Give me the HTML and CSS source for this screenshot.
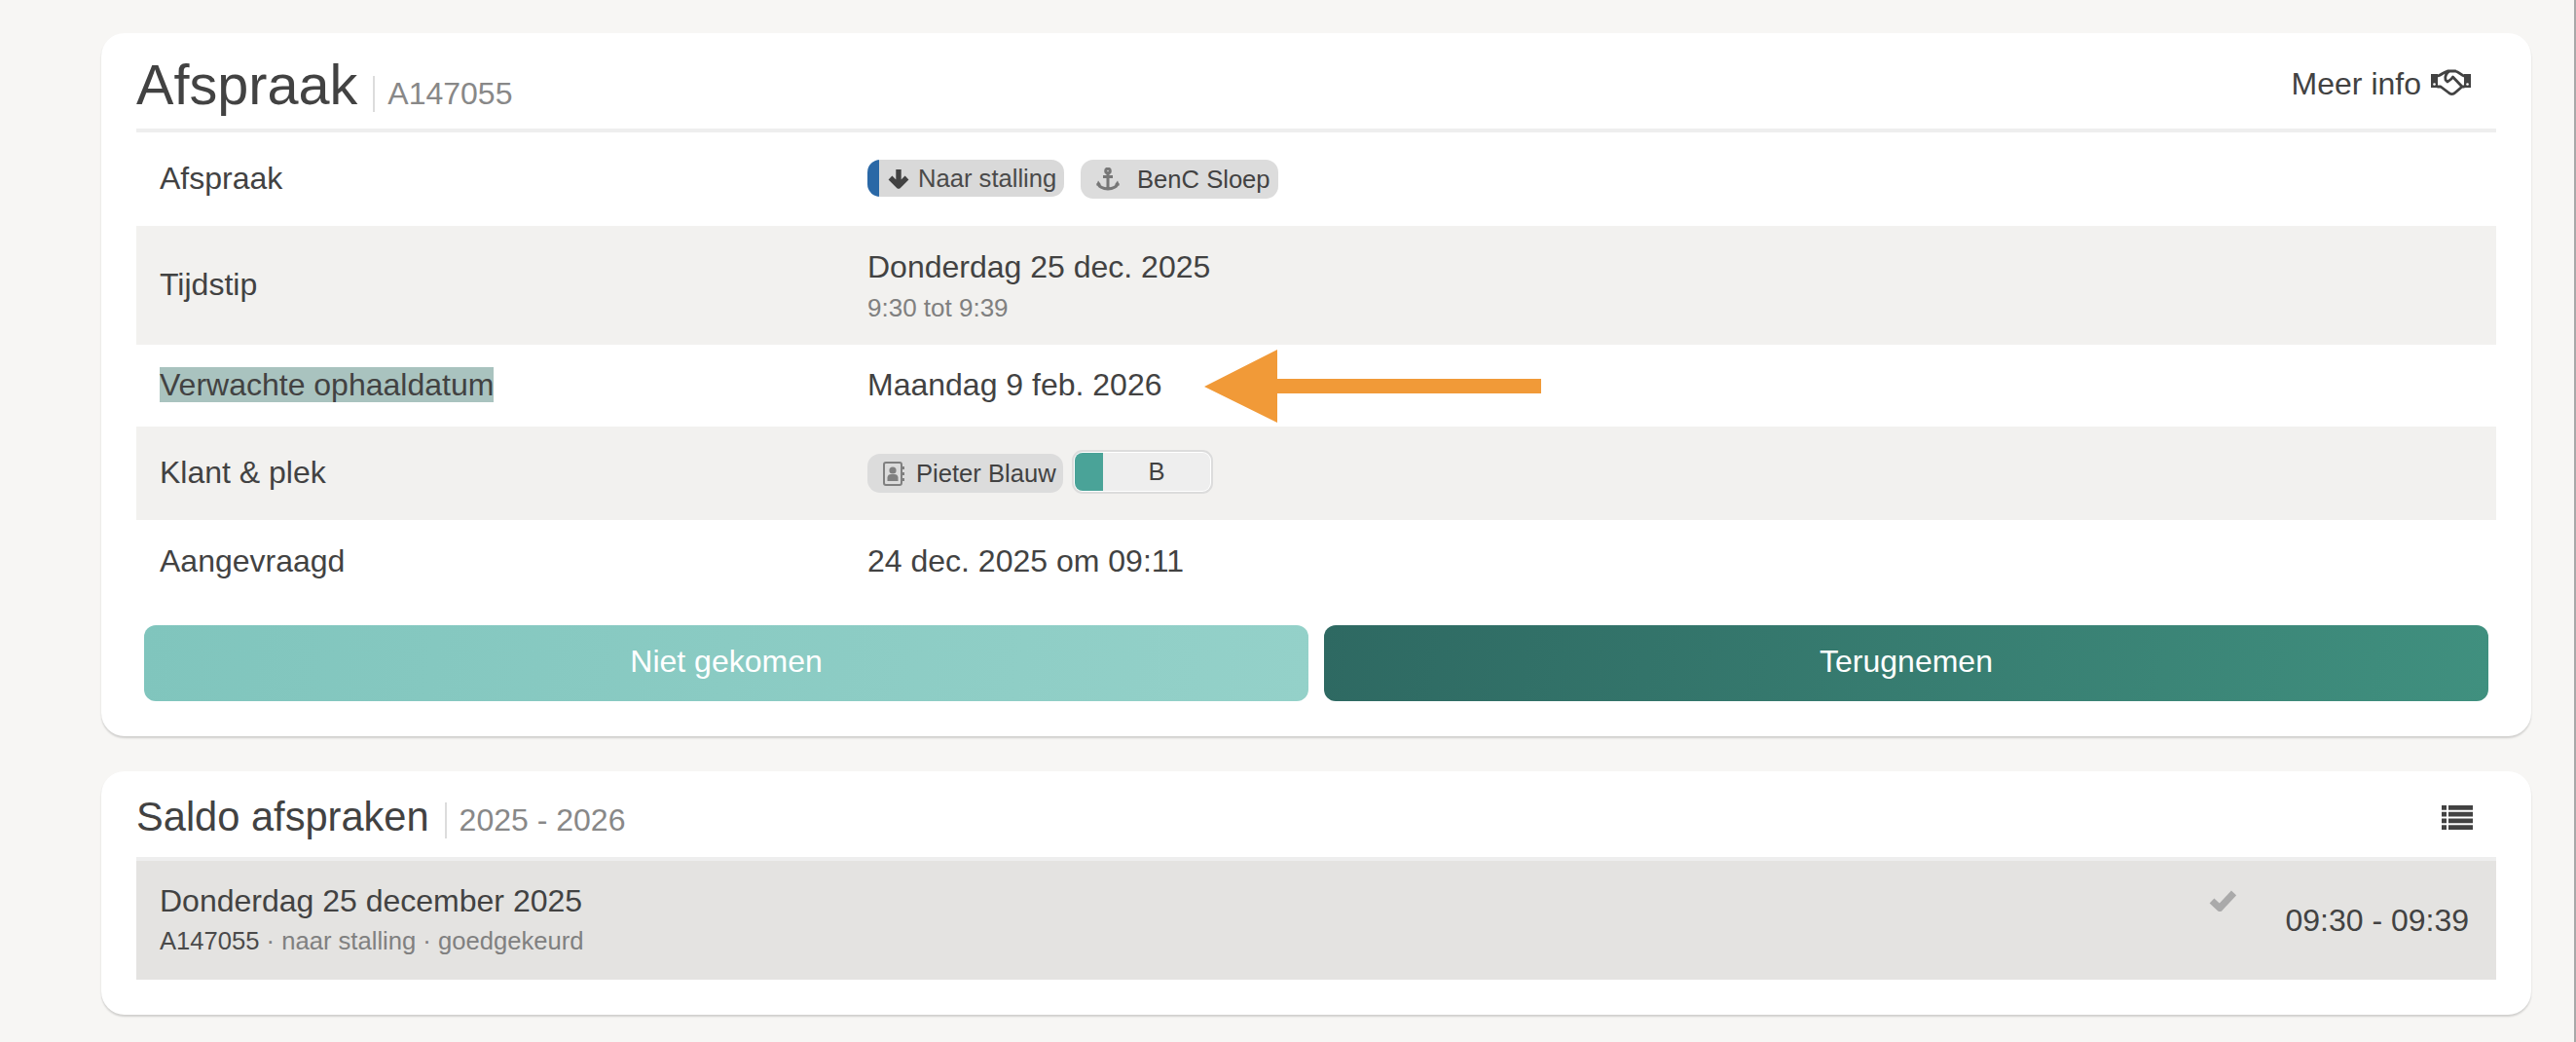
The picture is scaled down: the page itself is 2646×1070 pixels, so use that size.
FILE: index.html
```html
<!DOCTYPE html>
<html lang="nl">
<head>
<meta charset="utf-8">
<title>Afspraak A147055</title>
<link rel="stylesheet" href="styles.css">
</head>
<body>
<main class="page">
  <section class="card card-main">
    <header class="head head-main">
      <div class="head-title">
        <h1 class="title">Afspraak</h1>
        <span class="subtitle">A147055</span>
      </div>
      <a class="more">Meer info
        <svg class="icon-hands" viewBox="0 0 41 27" width="41" height="27" aria-hidden="true">
          <path class="solid" d="M0 5h7v14H0zM34 5h7v14h-7z"/>
          <circle class="hole" cx="3.500" cy="15.500" r="1.300"/>
          <circle class="hole" cx="37.500" cy="15.500" r="1.300"/>
          <path class="line" d="M7 7c4-1 6-4 10-5h8c4 1 6 4 9 5M7 18h3l8 6c2 2 5 2 7 0l7-6h2M25 2h-6c-3 2-5 5-4 9l2 2 4-3 1.500-2L32 18"/>
        </svg>
      </a>
    </header>

    <div class="row row-pills">
      <div class="label">Afspraak</div>
      <div class="value pills">
        <span class="pill pill-dir">
          <svg class="icon-down" viewBox="0 0 24 22" width="24" height="22" aria-hidden="true"><path d="M12 2v16.500M3.500 10.500l8.500 8.500 8.500-8.500"/></svg>
          Naar stalling
        </span>
        <span class="pill pill-boat">
          <svg class="icon-anchor" viewBox="0 0 24 24" width="24" height="24" aria-hidden="true">
            <circle cx="12" cy="3.500" r="2.300"/>
            <path d="M12 6v16M7 9.500h10M2 16c0 3.500 5 6 10 6s10-2.500 10-6"/>
            <path class="fill" d="M0 18.500l2-5 3 4zM24 18.500l-2-5-3 4z"/>
          </svg>
          <span class="pill-text">BenC Sloep</span>
        </span>
      </div>
    </div>

    <div class="row row-alt row-time">
      <div class="label">Tijdstip</div>
      <div class="value">
        <div>Donderdag 25 dec. 2025</div>
        <div class="sub">9:30 tot 9:39</div>
      </div>
    </div>

    <div class="row row-pickup">
      <div class="label"><mark class="hl">Verwachte ophaaldatum</mark></div>
      <div class="value">Maandag 9 feb. 2026</div>
      <svg class="arrow" viewBox="0 0 346 75" width="346" height="75" aria-hidden="true"><path d="M0 38 75 0v30h271v15H75v30z"/></svg>
    </div>

    <div class="row row-alt row-pills">
      <div class="label">Klant &amp; plek</div>
      <div class="value pills pills-tight">
        <span class="pill pill-client">
          <svg class="icon-book" viewBox="0 0 22 25" width="22" height="25" aria-hidden="true">
            <rect class="frame" x="1" y="1" width="18" height="23" rx="2"/>
            <circle class="fill" cx="10" cy="9" r="3.600"/>
            <path class="fill" d="M4.500 20v-3.500c0-2.500 2-3.500 3.500-3.500h4c1.500 0 3.500 1 3.500 3.500V20z"/>
            <path class="fill" d="M19 5h3v3h-3zM19 11h3v3h-3zM19 17h3v3h-3z"/>
          </svg>
          <span class="pill-text">Pieter Blauw</span>
        </span>
        <span class="spot"><span class="spot-color"></span><span class="spot-name">B</span></span>
      </div>
    </div>

    <div class="row row-last">
      <div class="label">Aangevraagd</div>
      <div class="value">24 dec. 2025 om 09:11</div>
    </div>

    <div class="actions">
      <button class="btn btn-light">Niet gekomen</button>
      <button class="btn btn-dark">Terugnemen</button>
    </div>
  </section>

  <section class="card card-saldo">
    <header class="head head-saldo">
      <div class="head-title">
        <h2 class="title-small">Saldo afspraken</h2>
        <span class="subtitle">2025 - 2026</span>
      </div>
      <svg class="icon-list" viewBox="0 0 32 25" width="32" height="25" aria-hidden="true">
        <path d="M0 0h5v4.800H0zM7 0h25v4.800H7zM0 6.700h5v4.800H0zM7 6.700h25v4.800H7zM0 13.400h5v4.800H0zM7 13.400h25v4.800H7zM0 20.200h5V25H0zM7 20.200h25V25H7z"/>
      </svg>
    </header>
    <div class="item">
      <div class="item-main">
        <div>Donderdag 25 december 2025</div>
        <div class="item-sub"><span class="item-code">A147055</span> · naar stalling · goedgekeurd</div>
      </div>
      <svg class="icon-check" viewBox="0 0 28 22" width="28" height="22" aria-hidden="true"><path d="M3 11l8 7.500L25.500 3"/></svg>
      <div class="item-time">09:30 - 09:39</div>
    </div>
  </section>
</main>
</body>
</html>
```

FILE: styles.css
```css
* { box-sizing: border-box; }

html, body {
  margin: 0;
  height: 100%;
}

body {
  background: #f7f6f4;
  color: #424242;
  font-family: "Liberation Sans", Arial, sans-serif;
  font-size: 32px;
  overflow: hidden;
}

.page {
  height: 1070px;
  padding: 34px 44px 0 104px;
  border-right: 2px solid #a8a8a8;
  display: flex;
  flex-direction: column;
  gap: 36px;
}

.card {
  background: #fff;
  border-radius: 24px;
  box-shadow: 0 2px 2px rgba(0, 0, 0, .16);
  padding: 0 36px;
}

.card-main { height: 722px; }
.card-saldo { height: 250px; }

.head {
  display: flex;
  justify-content: space-between;
  border-bottom: 4px solid #eee;
}

.head-main {
  height: 102px;
  padding: 20px 0 0;
}

.head-saldo {
  height: 92px;
  padding: 23px 0 0;
}

.head-title {
  display: flex;
  align-items: baseline;
}

.title {
  margin: 0;
  font-size: 57.6px;
  font-weight: 400;
}

.title-small {
  margin: 0;
  font-size: 41.6px;
  font-weight: 400;
}

.subtitle {
  margin-left: 16px;
  padding-left: 13px;
  border-left: 2px solid #dcdcdc;
  color: #888;
}

.more {
  display: flex;
  align-items: flex-start;
  gap: 10px;
  margin: 14px 26px 0 0;
  line-height: 37px;
}

.icon-hands { margin-top: 3px; }
.icon-hands .solid { fill: #424242; }
.icon-hands .hole { fill: #fff; }
.icon-hands .line { fill: none; stroke: #424242; stroke-width: 2.800; stroke-linejoin: round; stroke-linecap: round; }

.row {
  position: relative;
  display: grid;
  grid-template-columns: 727px 1fr;
  align-items: center;
  padding-left: 24px;
  line-height: 37px;
}

.label, .value { padding-bottom: 2px; }

.row-alt { background: #f2f1ef; }
.row-pills { height: 96px; }
.row-time { height: 122px; }
.row-pickup { height: 84px; }
.row-last { height: 92px; }
.row-last .label, .row-last .value { padding-bottom: 7px; }
.row-time .value { padding-bottom: 0; }

.hl { background: #a9c3bf; color: inherit; }

.sub {
  margin-top: 8px;
  color: #808080;
  font-size: 26px;
  line-height: 30px;
}

.arrow {
  position: absolute;
  left: 1097px;
  top: 5px;
  fill: #f19a38;
}

.pills {
  display: flex;
  align-items: center;
  gap: 17px;
  padding-bottom: 0;
  font-size: 25.600px;
}

.pills-tight { gap: 9px; }

.pill {
  display: inline-flex;
  align-items: center;
  height: 40px;
  background: #dcdcdc;
  border-radius: 13px;
}

.pill-dir {
  height: 38px;
  width: 202px;
  margin-bottom: 2px;
  background: linear-gradient(to right, #2a68a6 12px, #d9d9d9 12px);
  padding-left: 20px;
  gap: 8px;
  color: #4a4a4a;
}

.pill-boat {
  width: 203px;
  padding-left: 16px;
  gap: 18px;
}

.pill-client {
  width: 201px;
  padding-left: 16px;
  gap: 12px;
}

.pill-text { color: #424242; }

.icon-down path { fill: none; stroke: #424242; stroke-width: 5.400; stroke-linejoin: round; }
.icon-anchor { fill: none; stroke: #777; stroke-width: 3; }
.icon-anchor .fill { fill: #777; stroke: none; }
.icon-book .frame { fill: none; stroke: #808080; stroke-width: 2; }
.icon-book .fill { fill: #808080; }

.spot {
  display: flex;
  width: 145px;
  height: 45px;
  margin-bottom: 3px;
  border: 2px solid #dcdcdc;
  border-radius: 11px;
  padding: 1px;
  background: #fff;
}

.spot-color {
  width: 29px;
  background: #4aa398;
  border-radius: 8px 0 0 8px;
}

.spot-name {
  flex: 1;
  background: #eee;
  border-radius: 0 8px 8px 0;
  text-align: center;
  line-height: 38px;
}

.actions {
  display: flex;
  gap: 16px;
  padding: 16px 8px 0;
}

.btn {
  flex: 1;
  height: 78px;
  padding: 0 0 3px;
  border: 0;
  border-radius: 12px;
  color: #fff;
  font: inherit;
}

.btn-light { background: linear-gradient(100deg, #80c5bd, #94d1c9); }
.btn-dark { background: linear-gradient(100deg, #2e6962, #40907f); }

.icon-list { margin: 12px 24px 0 0; fill: #424242; }

.item {
  display: flex;
  height: 122px;
  background: #e4e3e1;
  padding: 23px 28px 0 24px;
}

.item-main { flex: 1; line-height: 37px; }

.item-sub {
  margin-top: 7px;
  color: #808080;
  font-size: 25.600px;
  line-height: 30px;
}

.item-code { color: #4a4a4a; }

.icon-check { margin: 7px 50px 0 0; fill: none; stroke: #aaa; stroke-width: 7; stroke-linejoin: round; }

.item-time { margin-top: 20px; line-height: 37px; }
```
